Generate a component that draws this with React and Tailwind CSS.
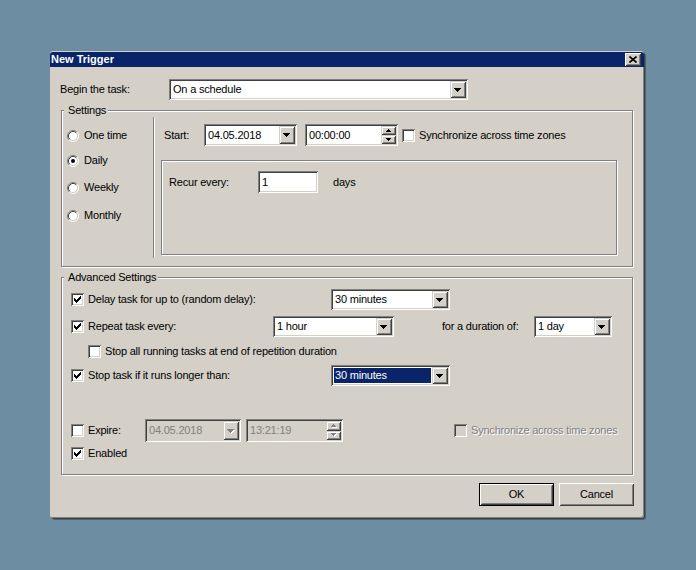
import React from 'react'

// classic 3D borders
const SUNKEN = 'shadow-[inset_1px_1px_0_#808080,inset_-1px_-1px_0_#ffffff,inset_2px_2px_0_#404040,inset_-2px_-2px_0_#d4d0c8]'
const RAISED = 'shadow-[inset_1px_1px_0_#d4d0c8,inset_-1px_-1px_0_#404040,inset_2px_2px_0_#ffffff,inset_-2px_-2px_0_#808080]'
const BUTTON = 'shadow-[inset_1px_1px_0_#ffffff,inset_-1px_-1px_0_#404040,inset_2px_2px_0_#d4d0c8,inset_-2px_-2px_0_#808080]'
const ETCHED = 'border border-[#808080] shadow-[inset_1px_1px_0_#ffffff,1px_1px_0_#ffffff]'

const Arrow = ({ up, small, disabled }) => {
    const w = small ? 5 : 7
    const h = small ? 3 : 4
    const pts = up ? `0,${h} ${w},${h} ${w / 2},0` : `0,0 ${w},0 ${w / 2},${h}`
    return (
        <svg width={w + 1} height={h + 1} viewBox={`0 0 ${w + 1} ${h + 1}`} shapeRendering="crispEdges">
            {disabled && <polygon points={pts} fill="#ffffff" transform="translate(1 1)" />}
            <polygon points={pts} fill={disabled ? '#808080' : '#000000'} />
        </svg>
    )
}

const Combo = ({ value, className, selected, disabled }) => (
    <div className={`flex p-[2px] ${disabled ? 'bg-[#d4d0c8] text-[#808080]' : 'bg-white'} ${SUNKEN} ${className}`}>
        {selected ? (
            <div className="flex-1 flex items-center m-[1px] pl-[1px] bg-[#0a246a] text-white">{value}</div>
        ) : (
            <div className="flex-1 flex items-center pl-[2px]">{value}</div>
        )}
        <div className={`w-[16px] flex items-center justify-center pt-[1px] bg-[#d4d0c8] ${RAISED}`}>
            <Arrow disabled={disabled} />
        </div>
    </div>
)

const Spin = ({ value, className, disabled }) => (
    <div className={`flex p-[2px] ${disabled ? 'bg-[#d4d0c8] text-[#808080]' : 'bg-white'} ${SUNKEN} ${className}`}>
        <div className="flex-1 flex items-center pl-[2px]">{value}</div>
        <div className="w-[15px] flex flex-col">
            <div className={`flex-1 flex items-center justify-center bg-[#d4d0c8] ${RAISED}`}>
                <Arrow up small disabled={disabled} />
            </div>
            <div className={`flex-1 flex items-center justify-center bg-[#d4d0c8] ${RAISED}`}>
                <Arrow small disabled={disabled} />
            </div>
        </div>
    </div>
)

const Check = ({ checked, disabled, label, className = '' }) => (
    <div className={`flex items-center ${className}`}>
        <div className={`w-[13px] h-[13px] shrink-0 p-[2px] ${disabled ? 'bg-[#d4d0c8]' : 'bg-white'} ${SUNKEN}`}>
            {checked && (
                <svg width="9" height="9" viewBox="0 0 9 9" shapeRendering="crispEdges">
                    <path d="M1 3 H2 V4 H3 V5 H4 V4 H5 V3 H6 V2 H7 V1 H8 V4 H7 V5 H6 V6 H5 V7 H4 V8 H3 V7 H2 V6 H1 Z" fill="#000" />
                </svg>
            )}
        </div>
        <span className={`ml-[4px] whitespace-nowrap ${disabled ? 'text-[#808080] [text-shadow:1px_1px_0_#ffffff]' : ''}`}>{label}</span>
    </div>
)

const Radio = ({ checked, label, className = '' }) => (
    <div className={`flex items-center h-[13px] ${className}`}>
        <svg width="12" height="12" viewBox="0 0 12 12" className="shrink-0">
            <circle cx="6" cy="6" r="4.5" fill="#ffffff" />
            <path d="M2.11 9.89 A5.5 5.5 0 0 1 9.89 2.11" stroke="#808080" fill="none" />
            <path d="M9.89 2.11 A5.5 5.5 0 0 1 2.11 9.89" stroke="#ffffff" fill="none" />
            <path d="M2.82 9.18 A4.5 4.5 0 0 1 9.18 2.82" stroke="#404040" fill="none" />
            <path d="M9.18 2.82 A4.5 4.5 0 0 1 2.82 9.18" stroke="#d4d0c8" fill="none" />
            {checked && <circle cx="6" cy="6" r="2" fill="#000" />}
        </svg>
        <span className="ml-[5px]">{label}</span>
    </div>
)

const Group = ({ label, className, children }) => (
    <div className={`relative ${ETCHED} ${className}`}>
        {label && (
            <span className="absolute -top-[7px] left-[2px] pl-[4px] pr-[2px] bg-[#d4d0c8] leading-[13px]">{label}</span>
        )}
        {children}
    </div>
)

const Button = ({ label, isDefault }) => (
    <div className={`w-[75px] h-[23px] ${isDefault ? 'border border-black' : ''}`}>
        <div className={`w-full h-full flex items-center justify-center bg-[#d4d0c8] ${BUTTON}`}>{label}</div>
    </div>
)

export default function App() {
    return (
        <div className="w-[696px] h-[570px] bg-[#6d8ea2] pt-[51px] pl-[50px] font-['Liberation_Sans',Arial,sans-serif] text-[11px] leading-[13px] tracking-[-0.2px] text-black">
            <div className="w-[594px] h-[467px] flex flex-col bg-[#d4d0c8] rounded-[3px] shadow-[inset_-1px_-1px_0_#808080,1px_1px_0_#404040,2px_2px_0_#4d6270]">
                {/* title bar */}
                <div className="h-[15px] mt-[1px] flex items-center justify-between pl-[1px] pr-[3px] bg-[#0a246a] rounded-t-[3px]">
                    <span className="font-bold text-white tracking-normal">New Trigger</span>
                    <div className={`w-[16px] h-[13px] flex items-center justify-center bg-[#d4d0c8] ${BUTTON}`}>
                        <svg width="8" height="7" viewBox="0 0 8 7">
                            <path d="M0.5 0.5 L7.5 6.5 M7.5 0.5 L0.5 6.5" stroke="#000" strokeWidth="1.6" />
                        </svg>
                    </div>
                </div>

                <div className="flex flex-col px-[11px]">
                    <div className="mt-[12px] h-[21px] flex items-center">
                        <span className="w-[109px] -ml-[1px]">Begin the task:</span>
                        <Combo value="On a schedule" className="w-[299px] h-[21px]" />
                    </div>

                    <Group label="Settings" className="mt-[10px] h-[157px] flex">
                        <div className="w-[91px] flex flex-col pl-[5px]">
                            <Radio label="One time" className="mt-[18px]" />
                            <Radio checked label="Daily" className="mt-[12px]" />
                            <Radio label="Weekly" className="mt-[14px]" />
                            <Radio label="Monthly" className="mt-[15px]" />
                        </div>
                        <div className="w-[1px] mt-[6px] mb-[8px] bg-[#808080] shadow-[1px_0_0_#ffffff]" />
                        <div className="flex-1 flex flex-col">
                            <div className="mt-[13px] h-[22px] flex items-center pl-[10px]">
                                <span className="w-[40px]">Start:</span>
                                <Combo value="04.05.2018" className="w-[93px] h-[22px]" />
                                <Spin value="00:00:00" className="ml-[8px] w-[93px] h-[22px]" />
                                <Check label="Synchronize across time zones" className="ml-[4px]" />
                            </div>
                            <div className={`mt-[14px] ml-[7px] mr-[15px] h-[95px] ${ETCHED}`}>
                                <div className="mt-[10px] h-[22px] flex items-center pl-[7px]">
                                    <span className="w-[89px]">Recur every:</span>
                                    <div className={`w-[60px] h-[22px] flex items-center pl-[4px] bg-white ${SUNKEN}`}>1</div>
                                    <span className="ml-[15px]">days</span>
                                </div>
                            </div>
                        </div>
                    </Group>

                    <Group label="Advanced Settings" className="mt-[10px] h-[198px] flex flex-col pl-[9px]">
                        <div className="mt-[11px] h-[21px] flex items-center">
                            <Check checked label="Delay task for up to (random delay):" className="w-[260px]" />
                            <Combo value="30 minutes" className="w-[119px] h-[21px]" />
                        </div>
                        <div className="mt-[6px] h-[21px] flex items-center">
                            <Check checked label="Repeat task every:" className="w-[202px]" />
                            <Combo value="1 hour" className="w-[121px] h-[21px]" />
                            <span className="ml-[48px] w-[92px]">for a duration of:</span>
                            <Combo value="1 day" className="w-[78px] h-[21px]" />
                        </div>
                        <div className="mt-[8px] h-[13px] flex items-center pl-[17px]">
                            <Check label="Stop all running tasks at end of repetition duration" />
                        </div>
                        <div className="mt-[7px] h-[21px] flex items-center">
                            <Check checked label="Stop task if it runs longer than:" className="w-[260px]" />
                            <Combo selected value="30 minutes" className="w-[119px] h-[21px]" />
                        </div>
                        <div className="mt-[33px] h-[23px] flex items-center">
                            <Check label="Expire:" className="w-[74px]" />
                            <Combo disabled value="04.05.2018" className="w-[96px] h-[23px]" />
                            <Spin disabled value="13:21:19" className="ml-[5px] w-[97px] h-[23px]" />
                            <Check disabled label="Synchronize across time zones" className="ml-[111px]" />
                        </div>
                        <div className="mt-[5px] h-[13px] flex items-center">
                            <Check checked label="Enabled" />
                        </div>
                    </Group>

                    <div className="mt-[8px] -mr-[1px] flex justify-end gap-[5px]">
                        <Button isDefault label="OK" />
                        <Button label="Cancel" />
                    </div>
                </div>
            </div>
        </div>
    )
}
